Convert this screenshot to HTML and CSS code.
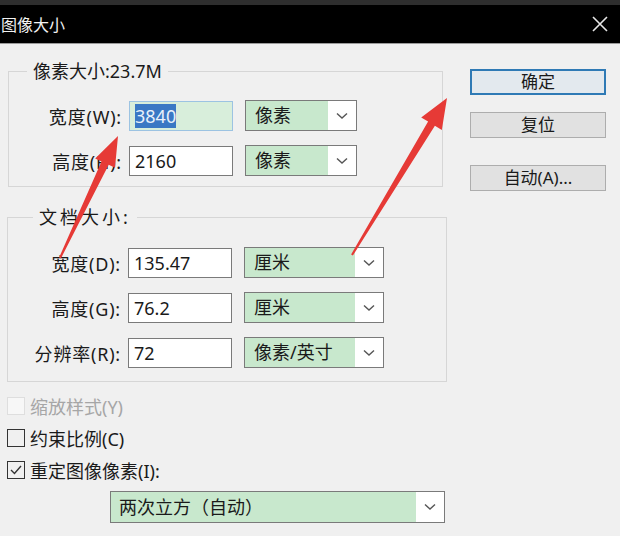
FILE: index.html
```html
<!DOCTYPE html>
<html lang="zh-CN">
<head>
    <meta charset="UTF-8">
    <title>图像大小</title>
    <link rel="stylesheet" href="styles.css">
</head>
<body>
    <div class="titlebar">
        <span class="title">图像大小</span>
        <svg class="close" width="16" height="16" viewBox="0 0 16 16">
            <path d="M1 1 L15 15 M15 1 L1 15" stroke="#e6e6e6" stroke-width="1.6" fill="none"/>
        </svg>
    </div>

    <div class="dialog">
        <div class="main">
            <!-- pixel size -->
            <fieldset class="group group-pixels">
                <legend>像素大小:23.7M</legend>
                <div class="row">
                    <label class="label">宽度(W):</label>
                    <div class="field focused"><span class="selected">3840</span></div>
                    <div class="select short"><span class="select-text">像素</span><span class="arrow"><svg width="12" height="8" viewBox="0 0 12 8"><path d="M1 1.5 L6 6 L11 1.5" stroke="#555" stroke-width="1.4" fill="none"/></svg></span></div>
                </div>
                <div class="row">
                    <label class="label">高度(H):</label>
                    <div class="field">2160</div>
                    <div class="select short"><span class="select-text">像素</span><span class="arrow"><svg width="12" height="8" viewBox="0 0 12 8"><path d="M1 1.5 L6 6 L11 1.5" stroke="#555" stroke-width="1.4" fill="none"/></svg></span></div>
                </div>
            </fieldset>

            <!-- document size -->
            <fieldset class="group group-doc">
                <legend class="wide">文档大小:</legend>
                <div class="row">
                    <label class="label">宽度(D):</label>
                    <div class="field">135.47</div>
                    <div class="select"><span class="select-text">厘米</span><span class="arrow"><svg width="12" height="8" viewBox="0 0 12 8"><path d="M1 1.5 L6 6 L11 1.5" stroke="#555" stroke-width="1.4" fill="none"/></svg></span></div>
                </div>
                <div class="row">
                    <label class="label">高度(G):</label>
                    <div class="field">76.2</div>
                    <div class="select"><span class="select-text">厘米</span><span class="arrow"><svg width="12" height="8" viewBox="0 0 12 8"><path d="M1 1.5 L6 6 L11 1.5" stroke="#555" stroke-width="1.4" fill="none"/></svg></span></div>
                </div>
                <div class="row">
                    <label class="label">分辨率(R):</label>
                    <div class="field">72</div>
                    <div class="select"><span class="select-text">像素/英寸</span><span class="arrow"><svg width="12" height="8" viewBox="0 0 12 8"><path d="M1 1.5 L6 6 L11 1.5" stroke="#555" stroke-width="1.4" fill="none"/></svg></span></div>
                </div>
            </fieldset>

            <!-- options -->
            <div class="options">
                <div class="check disabled"><span class="box"></span>缩放样式(Y)</div>
                <div class="check"><span class="box"></span>约束比例(C)</div>
                <div class="check"><span class="box"><svg width="16" height="16" viewBox="0 0 16 16"><path d="M3 8 L6.5 11.5 L13 4" stroke="#333" stroke-width="1.4" fill="none"/></svg></span>重定图像像素(I):</div>
            </div>
            <div class="select resample"><span class="select-text">两次立方（自动）</span><span class="arrow"><svg width="12" height="8" viewBox="0 0 12 8"><path d="M1 1.5 L6 6 L11 1.5" stroke="#555" stroke-width="1.4" fill="none"/></svg></span></div>
        </div>

        <div class="buttons">
            <button class="button default">确定</button>
            <button class="button">复位</button>
            <button class="button auto">自动(A)...</button>
        </div>
    </div>

    <!-- red annotation arrows -->
    <svg class="arrows" width="620" height="536" viewBox="0 0 620 536">
        <polygon fill="#e63a36" points="59.1,257.6 101.5,161.4 95.2,158.4 118,136 115,167.8 108.7,164.8 60.9,258.4"/>
        <polygon fill="#e63a36" points="351.1,254.5 428.1,121.6 421.2,117.5 447,98 441.8,129.9 434.9,125.8 352.9,255.5"/>
    </svg>
</body>
</html>
```

FILE: styles.css
```css
body {
    margin: 0;
    width: 620px;
    height: 536px;
    overflow: hidden;
    position: relative;
    background-color: #f0f0f0;
    font-family: "Noto Sans", "Noto Sans CJK SC", sans-serif;
    font-size: 18px;
    color: #1a1a1a;
}
.titlebar {
    height: 38px;
    border-top: 5px solid #2e2e2e;
    border-bottom: 1px solid #9a9a9a;
    background-color: #000;
    display: flex;
    align-items: center;
    justify-content: space-between;
    padding-right: 12px;
}
.title {
    color: #f2f2f2;
    font-size: 16px;
    margin-left: 1px;
}
.dialog {
    display: flex;
    padding-top: 14px;
}
.main {
    padding-left: 8px;
    width: 438px;
}
.group {
    margin: 0;
    border: 1px solid #d6d6d6;
    padding: 16px 10px 10px 18px;
    width: 405px;
}
.group legend {
    padding: 0 6px;
    line-height: 26px;
    color: #1a1a1a;
}
.group-doc {
    margin: 17px 0 0 -1px;
    width: 410px;
    padding: 17px 10px 13px 18px;
}
.group-doc legend.wide {
    margin-left: 7px;
    letter-spacing: 3px;
}
.row {
    display: flex;
    align-items: center;
    height: 31px;
}
.row + .row {
    margin-top: 14px;
}
.label {
    width: 95px;
    text-align: right;
    margin-right: 7px;
    white-space: nowrap;
    letter-spacing: 0.8px;
}
.field {
    width: 97px;
    height: 28px;
    line-height: 28px;
    border: 1px solid #7a7a7a;
    background-color: #fff;
    padding-left: 5px;
}
.field.focused {
    border-color: #9cc3e2;
    background-color: #d8eedb;
}
.selected {
    background-color: #3a78c4;
    color: #e8f0fa;
}
.select {
    display: flex;
    width: 138px;
    height: 29px;
    margin-left: 12px;
    border: 1px solid #7a7a7a;
    background-color: #fff;
}
.select.short {
    width: 110px;
}
.select-text {
    flex: 1;
    background-color: #c8e8cd;
    line-height: 29px;
    padding-left: 9px;
    white-space: nowrap;
}
.arrow {
    width: 28px;
    display: flex;
    align-items: center;
    justify-content: center;
}
.options {
    margin-top: 8px;
    margin-left: -1px;
}
.check {
    display: flex;
    align-items: center;
    height: 32px;
}
.check .box {
    width: 16px;
    height: 16px;
    border: 1px solid #333;
    margin-right: 5px;
    display: flex;
}
.check.disabled {
    color: #a6a6a6;
}
.check.disabled .box {
    border-color: #dedede;
    background-color: #f7f7f7;
}
.resample {
    margin: 5px 0 0 102px;
    width: 333px;
    height: 30px;
}
.resample .select-text {
    line-height: 30px;
    padding-left: 8px;
}
.buttons {
    display: flex;
    flex-direction: column;
    margin-left: 24px;
    padding-top: 11px;
}
.button {
    width: 136px;
    height: 26px;
    font-family: inherit;
    font-size: 17px;
    line-height: 22px;
    color: #1a1a1a;
    background-color: #e1e1e1;
    border: 1px solid #adadad;
    padding: 0;
    cursor: pointer;
}
.button.default {
    border: 2px solid #2f7ab5;
    background-color: #e3e9ee;
}
.button + .button {
    margin-top: 17px;
}
.button.auto {
    margin-top: 27px;
}
.arrows {
    position: absolute;
    left: 0;
    top: 0;
    pointer-events: none;
}
```
